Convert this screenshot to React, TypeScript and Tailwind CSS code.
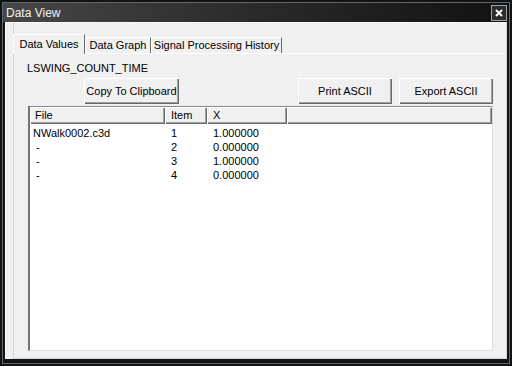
import React from 'react';

const font = { fontFamily: '"Liberation Sans", Arial, sans-serif' };

const raised =
  'bg-[#f0f0f0] shadow-[inset_1px_1px_0_#ffffff,inset_-1px_-1px_0_#696969,inset_-2px_-2px_0_#a0a0a0]';

const rows = [
  { file: 'NWalk0002.c3d', item: '1', x: '1.000000' },
  { file: ' -', item: '2', x: '0.000000' },
  { file: ' -', item: '3', x: '1.000000' },
  { file: ' -', item: '4', x: '0.000000' },
];

const Button: React.FC<{ label: string; className?: string }> = ({ label, className = '' }) => (
  <div className={`h-[26px] flex items-center justify-center text-[11px] text-black ${raised} ${className}`}>
    {label}
  </div>
);

const App: React.FC = () => {
  return (
    <div className="w-[512px] h-[366px] bg-[#101417] p-[2px] overflow-hidden" style={font}>
      <div className="h-full border border-[#63676a] flex flex-col bg-[#101417]">
        {/* Title bar */}
        <div className="h-[19px] flex items-center pl-[3px] pr-[2px] bg-linear-to-r from-[#474747] via-[#2a2a2a] to-[#121212]">
          <span className="text-[12px] text-[#f2f2f2] leading-none mt-[1px]">Data View</span>
          <div className="ml-auto mt-[1px] w-[16px] h-[16px] border border-[#a3a3a3] bg-[#2b2d2f] flex items-center justify-center">
            <svg width="8" height="8" viewBox="0 0 8 8">
              <path d="M1 1 L7 7 M7 1 L1 7" stroke="#ffffff" strokeWidth="2" />
            </svg>
          </div>
        </div>

        {/* Client area */}
        <div className="flex-1 flex px-[2px] pb-[4px]">
          <div className="flex-1 flex bg-[#f0f0f0] border-l border-t border-[#fbfbfb] pl-[7px]">
            <div className="flex-1 flex flex-col border-l border-r border-b border-[#d6d6d6]">
              {/* Tabs */}
              <div className="flex items-end h-[20px] mt-[11px] -ml-px -mb-px relative z-10 text-[11px] text-black">
                <div className="w-[72px] h-[20px] flex items-center justify-center bg-[#f0f0f0] border-l border-t border-white border-r border-r-[#696969] pb-[1px]">
                  Data Values
                </div>
                <div className="w-[66px] h-[16px] mb-px flex items-center justify-center bg-[#f0f0f0] border-l border-t border-white border-r border-r-[#696969]">
                  Data Graph
                </div>
                <div className="w-[131px] h-[16px] mb-px flex items-center justify-center bg-[#f0f0f0] border-l border-t border-white border-r border-r-[#696969]">
                  Signal Processing History
                </div>
              </div>

              {/* Panel */}
              <div className="flex-1 flex flex-col border-t border-white">
                <div className="ml-[13px] mt-[8px] text-[11px] leading-[13px] text-black">LSWING_COUNT_TIME</div>

                <div className="ml-[14px] w-[465px] mt-[3px] flex">
                  <Button label="Copy To Clipboard" className="ml-[56px] w-[95px]" />
                  <div className="flex-1" />
                  <Button label="Print ASCII" className="w-[94px]" />
                  <Button label="Export ASCII" className="w-[94px] ml-[7px]" />
                </div>

                {/* List view */}
                <div className="ml-[14px] w-[465px] h-[245px] mt-[2px] bg-white border-l-2 border-t border-l-[#737373] border-t-[#8a8a8a] border-r border-b border-r-[#dedede] border-b-[#dedede] flex flex-col text-[11px] text-black">
                  <div className="h-[17px] flex">
                    <div className={`w-[135px] pl-[5px] flex items-center ${raised}`}>File</div>
                    <div className={`w-[42px] pl-[6px] flex items-center ${raised}`}>Item</div>
                    <div className={`w-[80px] pl-[6px] flex items-center ${raised}`}>X</div>
                    <div className={`flex-1 ${raised}`} />
                  </div>
                  <div className="pt-[2px]">
                    {rows.map((r, i) => (
                      <div key={i} className="h-[14px] leading-[14px] flex">
                        <div className="w-[135px] pl-[3px] whitespace-pre">{r.file}</div>
                        <div className="w-[42px] pl-[6px]">{r.item}</div>
                        <div className="w-[80px] pl-[6px]">{r.x}</div>
                      </div>
                    ))}
                  </div>
                </div>
              </div>
            </div>
          </div>
        </div>
      </div>
    </div>
  );
};

export default App;
